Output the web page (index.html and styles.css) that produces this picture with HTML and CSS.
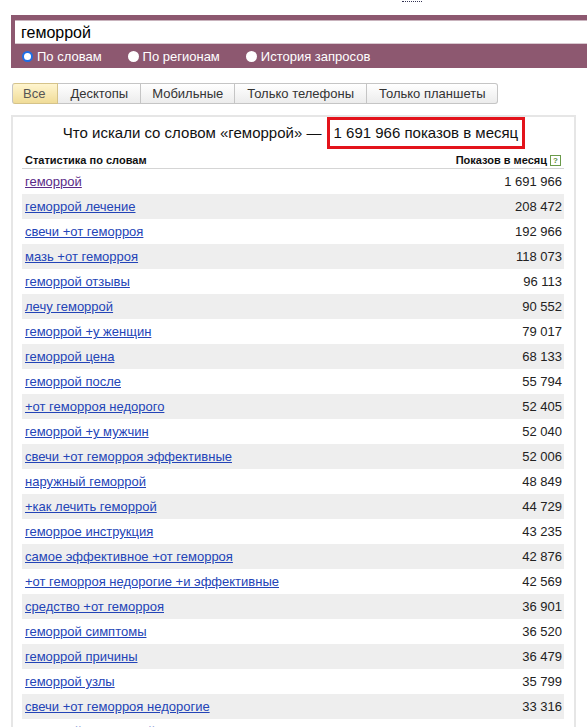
FILE: index.html
```html
<!DOCTYPE html>
<html lang="ru">
<head>
<meta charset="utf-8">
<link rel="stylesheet" href="styles.css">
</head>
<body>
<div class="topline"><span class="dots"></span></div>
<div class="search">
  <div class="input">геморрой</div>
  <div class="radios">
    <label class="radio"><span class="dot dot-on"></span>По словам</label>
    <label class="radio"><span class="dot"></span>По регионам</label>
    <label class="radio"><span class="dot"></span>История запросов</label>
  </div>
</div>
<div class="tabs">
  <span class="tab tab-on">Все</span>
  <span class="tab">Десктопы</span>
  <span class="tab">Мобильные</span>
  <span class="tab">Только телефоны</span>
  <span class="tab">Только планшеты</span>
</div>
<div class="box">
  <div class="title">Что искали со словом «геморрой» — <span class="hl">1 691 966 показов в месяц</span></div>
  <div class="head">
    <span>Статистика по словам</span>
    <span class="head-r">Показов в месяц <span class="q">?</span></span>
  </div>
  <div class="rows" id="rows"></div>
</div>
<script>
const data = [
["геморрой","1 691 966"],
["геморрой лечение","208 472"],
["свечи +от геморроя","192 966"],
["мазь +от геморроя","118 073"],
["геморрой отзывы","96 113"],
["лечу геморрой","90 552"],
["геморрой +у женщин","79 017"],
["геморрой цена","68 133"],
["геморрой после","55 794"],
["+от геморроя недорого","52 405"],
["геморрой +у мужчин","52 040"],
["свечи +от геморроя эффективные","52 006"],
["наружный геморрой","48 849"],
["+как лечить геморрой","44 729"],
["геморрое инструкция","43 235"],
["самое эффективное +от геморроя","42 876"],
["+от геморроя недорогие +и эффективные","42 569"],
["средство +от геморроя","36 901"],
["геморрой симптомы","36 520"],
["геморрой причины","36 479"],
["геморрой узлы","35 799"],
["свечи +от геморроя недорогие","33 316"],
["геморрой внутренний","33 120"]
];
const rows = document.getElementById('rows');
data.forEach((d, i) => {
  const r = document.createElement('div');
  r.className = 'row' + (i % 2 ? ' row-alt' : '');
  const a = document.createElement('a');
  a.href = '#';
  a.className = 'link' + (i === 0 ? ' visited' : '');
  a.textContent = d[0];
  const n = document.createElement('span');
  n.className = 'num';
  n.textContent = d[1];
  r.appendChild(a); r.appendChild(n);
  rows.appendChild(r);
});
</script>
</body>
</html>
```
FILE: styles.css
```css
html, body { margin: 0; padding: 0; background: #fff; }
body { font-family: "Liberation Sans", Arial, sans-serif; color: #000; overflow: hidden; height: 727px; }
.topline { height: 15px; position: relative; }
.dots { position: absolute; left: 402px; top: 1px; width: 20px; border-top: 1px dotted #335; }
.search { margin-left: 11px; background: #8d5870; padding: 5px 0 0 4px; height: 48px; }
.input { background: #fff; height: 24px; border-top: 1px solid #c9b3bd; border-bottom: 1px solid #d8c9d0; box-sizing: border-box; font-size: 16px; line-height: 23px; padding-left: 6px; color: #000; }
.radios { display: flex; height: 24px; align-items: center; padding-left: 7px; font-size: 13px; color: #fff; }
.radio { display: flex; align-items: center; margin-right: 26px; }
.dot { width: 11px; height: 11px; border-radius: 50%; background: #fff; margin-right: 4px; box-sizing: border-box; }
.dot-on { border: 2px solid #1e6ee6; background: #fff; }
.tabs { display: flex; margin: 15px 0 0 12px; height: 21px; }
.tab { display: flex; align-items: center; padding: 0 12px; font-size: 13px; color: #333; border: 1px solid #c5c5c5; border-left: none; background: linear-gradient(#ffffff, #ececec); }
.tab:first-child { border-left: 1px solid #c5c5c5; border-radius: 3px 0 0 3px; }
.tab:last-child { border-radius: 0 3px 3px 0; }
.tab-on { background: linear-gradient(#fff5cf, #f0dc98); border-color: #d5c38a; color: #555; padding: 0 12px 0 10px; }
.tab:nth-child(3) { padding: 0 11px; }
.box { margin: 11px 0 0 11px; width: 565px; box-sizing: border-box; border: 2px solid #e6e6e6; border-bottom: none; padding: 0 10px 0 9px; }
.title { text-align: center; font-size: 15px; line-height: 31px; height: 31px; padding-left: 2px; color: #111; }
.hl { display: inline-block; border: 3px solid #e3131b; padding: 0 4px 0 4px; line-height: 26px; margin-left: 1px; }
.head { display: flex; justify-content: space-between; font-size: 11px; font-weight: bold; color: #111; height: 15px; line-height: 15px; padding: 0 3px 0 3px; border-bottom: 1px solid #d5d5d5; margin-top: 5px; }
.head-r { display: flex; align-items: center; }
.q { display: inline-block; width: 9px; height: 9px; border: 1px solid #6a9a4a; color: #5b8d3a; font-size: 8px; line-height: 9px; text-align: center; margin-left: 3px; font-weight: bold; }
.row { display: flex; justify-content: space-between; align-items: center; height: 25px; padding: 0 2px 0 3px; font-size: 13px; }
.row-alt { background: #eeeeee; }
.link { color: #2344b7; text-decoration: underline; }
.link.visited { color: #5a2a88; }
.num { color: #222; }
```
